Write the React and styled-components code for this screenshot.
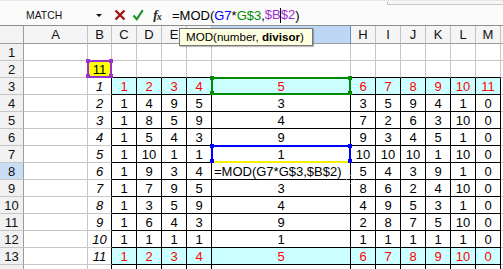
import React from "react";
import styled, { createGlobalStyle } from "styled-components";

const GlobalStyle = createGlobalStyle`
  html, body {
    margin: 0;
    padding: 0;
    background: #ffffff;
    overflow: hidden;
  }
  body {
    font-family: "Liberation Sans", Arial, sans-serif;
  }
`;

const COLS = ["A", "B", "C", "D", "E", "F", "G", "H", "I", "J", "K", "L", "M", "N"];
// first width is the row header column
const WIDTHS = [24, 64, 24, 25, 25, 25, 25, 139, 25, 25, 25, 25, 25, 25, 20];
const ACTIVE_COL = "G";
const ACTIVE_ROW = 8;
const FORMULA = "=MOD(G7*G$3,$B$2)";

// row 3 holds 1..11, each row below is MOD(prev * row3, 11)
function buildValues() {
  const values = {};
  let prev = null;
  for (let r = 3; r <= 15; r++) {
    const row = [];
    for (let k = 1; k <= 11; k++) {
      row.push(prev ? (prev[k - 1] * k) % 11 : k);
    }
    values[r] = row;
    prev = row;
  }
  return values;
}

const VALUES = buildValues();

const Window = styled.div`
  position: relative;
  width: 503px;
  height: 269px;
  overflow: hidden;
  background: #ffffff;
`;

const FormulaBar = styled.div`
  box-sizing: border-box;
  height: 26px;
  background: #fbfbfb;
  border-bottom: 1px solid #8e8e8e;
  display: flex;
  flex-direction: column;
`;

const TopStrip = styled.div`
  box-sizing: border-box;
  height: 5px;
  display: flex;
  border-top: 1px dotted #d8d8d8;
`;

const Grip = styled.div`
  margin-left: auto;
  width: 116px;
  box-sizing: border-box;
  border-left: 1px solid #c8c8c8;
  border-bottom: 1px solid #c8c8c8;
  background: #f6f6f6;
`;

const BarRow = styled.div`
  flex: 1;
  display: flex;
  align-items: center;
`;

const NameBox = styled.div`
  width: 111px;
  height: 100%;
  box-sizing: border-box;
  display: flex;
  align-items: center;
  padding-left: 26px;
  font-size: 10.4px;
  color: #111111;
`;

const NameText = styled.span`
  flex: 1;
`;

const DropArrow = styled.span`
  width: 0;
  height: 0;
  margin-right: 9px;
  border-left: 3px solid transparent;
  border-right: 3px solid transparent;
  border-top: 3px solid #111111;
`;

const IconButton = styled.span`
  display: flex;
  align-items: center;
  justify-content: center;
  width: ${(p) => p.$w}px;
  height: 20px;
`;

const Fx = styled.span`
  font-family: "Liberation Serif", "Times New Roman", serif;
  font-style: italic;
  font-weight: bold;
  font-size: 13px;
  color: #222222;
  letter-spacing: -1px;
  span {
    font-size: 10px;
    position: relative;
    top: 1px;
  }
`;

const FormulaText = styled.div`
  flex: 1;
  padding-left: 5px;
  font-size: 13px;
  color: #000000;
  white-space: nowrap;
  display: flex;
  align-items: center;
  height: 100%;
`;

const Ref = styled.span`
  color: ${(p) => p.$color};
`;

const Caret = styled.span`
  display: inline-block;
  width: 1px;
  height: 15px;
  background: #000000;
  vertical-align: middle;
  margin: 0 -0.5px;
`;

const Sheet = styled.div`
  display: grid;
  grid-template-columns: ${WIDTHS.map((w) => `${w}px`).join(" ")};
  grid-auto-rows: 17px;
  grid-template-rows: 18px;
`;

const Corner = styled.div`
  box-sizing: border-box;
  background: #f3f3f3;
  border-right: 1px solid #9c9c9c;
  border-bottom: 1px solid #9c9c9c;
`;

const ColHeader = styled.div`
  box-sizing: border-box;
  background: ${(p) => (p.$active ? "#bdd7f4" : "#f5f5f5")};
  border-right: 1px solid ${(p) => (p.$active ? "#5b8fd6" : "#c2c2c2")};
  border-bottom: 1px solid #9c9c9c;
  font-size: 13px;
  line-height: 17px;
  text-align: center;
  color: #111111;
`;

const RowHeader = styled.div`
  box-sizing: border-box;
  background: ${(p) => (p.$active ? "#c9ddf5" : "#f1f1f1")};
  border-right: 1px solid #9c9c9c;
  border-bottom: 1px solid #c6c6c6;
  font-size: 13px;
  line-height: 15px;
  padding-top: 1px;
  text-align: center;
  color: #111111;
`;

const Cell = styled.div`
  position: relative;
  box-sizing: border-box;
  border-right: 1px solid ${(p) => p.$right};
  border-bottom: 1px solid ${(p) => p.$bottom};
  background: ${(p) => p.$bg};
  color: ${(p) => p.$color};
  font-style: ${(p) => (p.$italic ? "italic" : "normal")};
  text-align: ${(p) => p.$align};
  padding-left: ${(p) => (p.$align === "left" ? "2px" : "0")};
  font-size: 13px;
  line-height: 15px;
  padding-top: 1px;
  white-space: nowrap;
`;

const RangeBox = styled.div`
  position: absolute;
  top: -1px;
  left: -1px;
  right: -1px;
  bottom: -1px;
  border: 2px solid ${(p) => p.$color};
  border-bottom-color: ${(p) => p.$bottom || p.$color};
  pointer-events: none;
  z-index: 2;
`;

const Handle = styled.span`
  position: absolute;
  width: 4px;
  height: 4px;
  background: ${(p) => p.$color};
  ${(p) => (p.$x === "left" ? "left: -3px;" : "right: -3px;")}
  ${(p) => (p.$y === "top" ? "top: -3px;" : "bottom: -2px;")}
`;

const Crosshair = styled.svg`
  position: absolute;
  right: -5px;
  bottom: -5px;
  z-index: 3;
`;

const Tooltip = styled.div`
  position: absolute;
  top: 28px;
  left: 179px;
  width: 134px;
  height: 18px;
  box-sizing: border-box;
  background: #ffffe1;
  border: 1px solid #767676;
  box-shadow: 1px 1px 1px rgba(0, 0, 0, 0.25);
  font-size: 11.6px;
  line-height: 16px;
  padding-left: 6px;
  color: #000000;
  white-space: nowrap;
  z-index: 5;
  b {
    font-weight: bold;
  }
`;

function Range({ color, bottom }) {
  return (
    <RangeBox $color={color} $bottom={bottom}>
      <Handle $color={color} $x="left" $y="top" />
      <Handle $color={color} $x="right" $y="top" />
      <Handle $color={color} $x="left" $y="bottom" />
      <Handle $color={color} $x="right" $y="bottom" />
    </RangeBox>
  );
}

function cellProps(row, col) {
  const ci = COLS.indexOf(col);
  const inTable = row >= 3 && ci >= 2 && ci <= 12;
  const props = {
    $right: "#c6c6c6",
    $bottom: "#c6c6c6",
    $bg: "#ffffff",
    $color: "#000000",
    $italic: false,
    $align: "center",
    text: "",
    extra: null,
  };

  if (inTable) {
    props.$right = "#000000";
    props.$bottom = "#000000";
    const v = VALUES[row][ci - 2];
    props.text = String(v);
    if (row === 3 || row === 13) {
      props.$bg = "#ccffff";
      props.$color = "#ff0000";
    }
  }
  if (row === 2 && ci >= 2 && ci <= 12) props.$bottom = "#000000";
  if (col === "B" && row >= 3) {
    props.$right = "#000000";
    props.$italic = true;
    props.text = String(row - 2);
  }
  if (col === "B" && row === 2) {
    props.$bg = "#ffff00";
    props.text = "11";
    props.extra = <Range color="#9b30d0" />;
  }
  if (col === "G" && row === 3) props.extra = <Range color="#008a00" />;
  if (col === "G" && row === 7) props.extra = <Range color="#0000ff" bottom="#f4f000" />;
  if (col === ACTIVE_COL && row === ACTIVE_ROW) {
    props.text = FORMULA;
    props.$align = "left";
    props.extra = (
      <Crosshair width="9" height="9" viewBox="0 0 9 9">
        <path d="M4.5 0.5v8M0.5 4.5h8" stroke="#ffffff" strokeWidth="3" />
        <path d="M4.5 1v7M1 4.5h7" stroke="#000000" strokeWidth="1" />
      </Crosshair>
    );
  }
  return props;
}

function SheetRow({ row }) {
  return (
    <>
      <RowHeader $active={row === ACTIVE_ROW}>{row}</RowHeader>
      {COLS.map((col) => {
        const { text, extra, ...style } = cellProps(row, col);
        return (
          <Cell key={col} {...style}>
            {text}
            {extra}
          </Cell>
        );
      })}
    </>
  );
}

export default function App() {
  const rows = Array.from({ length: 14 }, (_, i) => i + 1);
  return (
    <>
      <GlobalStyle />
      <Window>
        <FormulaBar>
          <TopStrip>
            <Grip />
          </TopStrip>
          <BarRow>
            <NameBox>
              <NameText>MATCH</NameText>
              <DropArrow />
            </NameBox>
            <IconButton $w={18}>
              <svg width="12" height="12" viewBox="0 0 12 12">
                <path d="M1.5 1.5L10.5 10.5M10.5 1.5L1.5 10.5" stroke="#a01818" strokeWidth="2.4" />
              </svg>
            </IconButton>
            <IconButton $w={18}>
              <svg width="12" height="12" viewBox="0 0 12 12">
                <path d="M1.5 6.5L4.8 10.2L10.8 1.2" stroke="#22952a" strokeWidth="2.2" fill="none" />
              </svg>
            </IconButton>
            <IconButton $w={20}>
              <Fx>
                f<span>x</span>
              </Fx>
            </IconButton>
            <FormulaText>
              =MOD(
              <Ref $color="#0000ff">G7</Ref>*
              <Ref $color="#008a00">G$3</Ref>,
              <Ref $color="#9b30d0">
                $B
                <Caret />
                $2
              </Ref>
              )
            </FormulaText>
          </BarRow>
        </FormulaBar>
        <Sheet>
          <Corner />
          {COLS.map((col) => (
            <ColHeader key={col} $active={col === ACTIVE_COL}>
              {col === "N" ? "" : col}
            </ColHeader>
          ))}
          {rows.map((row) => (
            <SheetRow key={row} row={row} />
          ))}
        </Sheet>
        <Tooltip>
          MOD(number, <b>divisor</b>)
        </Tooltip>
      </Window>
    </>
  );
}
